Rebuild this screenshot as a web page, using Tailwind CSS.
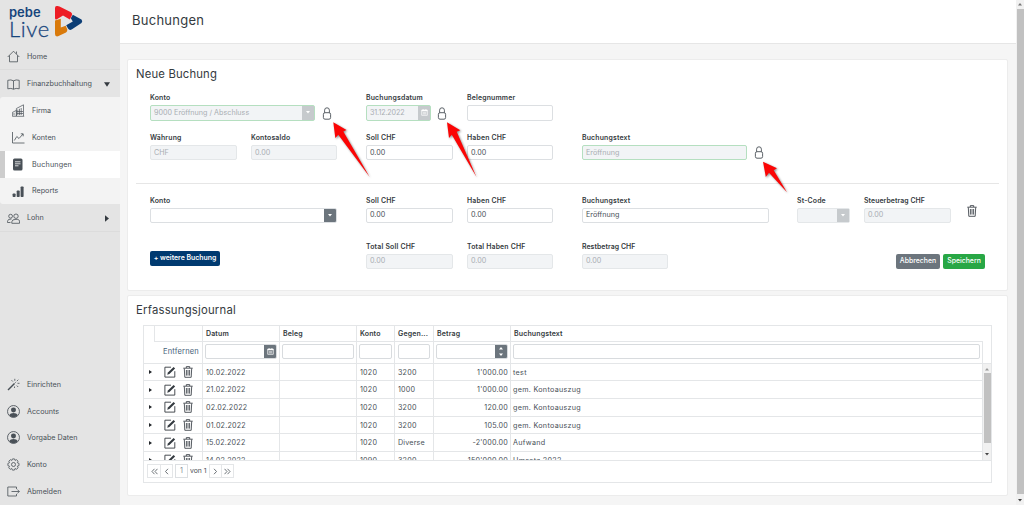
<!DOCTYPE html>
<html lang="de">
  <head>
    <meta charset="UTF-8" />
    <meta name="viewport" content="width=device-width, initial-scale=1.0" />
    <title>Buchungen</title>
    <script src="https://cdn.jsdelivr.net/npm/@tailwindcss/browser@4"></script>
  </head>
  <body
    class="relative flex h-[505px] w-[1024px] overflow-hidden bg-[#f5f5f5] font-['Inter','Liberation_Sans',sans-serif] text-[7.2px] leading-none text-[#495057]"
  >
    <!-- Icons -->
    <svg class="hidden">
      <symbol id="lock" viewBox="0 0 10 13">
        <path d="M2.6 5.7V3.2a2.4 2.4 0 0 1 4.8 0v2.5M1.4 7.3q0-1.6 1.6-1.6h4q1.6 0 1.6 1.6v3.3q0 1.6-1.6 1.6H3q-1.6 0-1.6-1.6z" fill="none" stroke="#495057" stroke-width=".9" />
      </symbol>
      <symbol id="trash" viewBox="0 0 10 12">
        <path d="M.3 2.2h9.4M3.3 2V.6h3.4V2M1.3 2.4l.5 8.9h6.4l.5-8.9M3.4 4v5.6M5 4v5.6M6.6 4v5.6" fill="none" stroke="#444a50" stroke-width=".9" />
      </symbol>
      <symbol id="edit" viewBox="0 0 12 12">
        <path d="M7 1.2H.9v9.9h9.9V5.2" fill="none" stroke="#343a40" stroke-width=".9" />
        <path d="M3.2 8.8l.7-2.2L9.6 1l1.5 1.4-5.7 5.7z" fill="#343a40" />
      </symbol>
      <symbol id="calendar" viewBox="0 0 8 8">
        <path d="M.8 1.2h6.4v6H.8z" fill="none" stroke="#fff" stroke-width=".8" />
        <path d="M.8 1h6.4v1.6H.8zM2 3.6h4v.8H2zM2 5.2h4V6H2zM2 0h.8v1H2zM5.2 0H6v1h-.8z" fill="#fff" />
      </symbol>
      <symbol id="user" viewBox="0 0 12 12">
        <circle cx="6" cy="6" r="5.5" fill="none" stroke="#495057" stroke-width=".8" />
        <circle cx="6" cy="4.6" r="2.3" fill="#495057" />
        <path d="M2 9.2q1.2-1.9 4-1.9t4 1.9Q8.600 11.200 6 11.200T2 9.200z" fill="#495057" />
      </symbol>
    </svg>

    <!-- Sidebar -->
    <aside class="flex w-[120px] shrink-0 flex-col bg-[#e4e4e4]">
      <div class="flex h-[43px] shrink-0 pl-[9px] text-[#17457c]">
        <div class="w-[46px] pt-[5px]">
          <p class="h-[14px] text-[13px] leading-[14px] font-semibold">pebe</p>
          <p class="h-[20px] font-['Lato'] text-[22px] leading-[20px] font-light tracking-[0.03em] [-webkit-text-stroke:0.3px_#17457c]">Live</p>
        </div>
        <svg class="mt-[5px] h-[33px] w-[28px]" viewBox="0 0 28 33">
          <path d="M0 3Q0 .5 2.500 1L4.500 1.400 16 7.200Q17.700 8.500 16.800 10.500L14.800 14.500 8 10.600 1.500 14.500Q0 15 0 13z" fill="#ed1c24" />
          <path d="M17.800 9.800L26.500 14.500Q28 16.300 26.500 18L17 24.300Q14.500 25.800 13 23.500L11.200 20.300 17.800 16.600 15.800 13.200z" fill="#0b3d75" />
          <path d="M0 15.500L5.800 13.800V22.500L10.700 20.800 12.300 24.500Q12.600 26.500 11 27.600L3 31.300Q0 32 0 29z" fill="#d97a0b" />
        </svg>
      </div>

      <a class="flex h-[27px] shrink-0 items-center border-b border-[#dcdcdc] pl-[7px] pt-px">
        <svg class="mr-[7px] size-[13px]" viewBox="0 0 13 13" fill="none" stroke="#495057" stroke-width=".8"><path d="M.7 7L6.500 1.200 12.300 7M2.500 5.500v6.300h8V5.500M9.500 3.800V1.500" /></svg>
        Home
      </a>
      <a class="flex h-[27px] shrink-0 items-center pl-[7px] pt-px">
        <svg class="mr-[7px] size-[13px]" viewBox="0 0 13 13" fill="none" stroke="#495057" stroke-width=".8"><path d="M6.500 2.800Q4 1.300.8 2.300v8.500Q4 9.800 6.500 11.200 9 9.800 12.200 10.800V2.300Q9 1.300 6.500 2.800zM6.500 2.800v8.400" /></svg>
        <span class="w-[77px]">Finanzbuchhaltung</span>
        <svg class="h-[5px] w-[6px]" viewBox="0 0 6 5"><path d="M0 .3h6L3 4.800z" fill="#343a40" /></svg>
      </a>

      <div class="shrink-0 rounded-l-[3px] bg-[#f3f3f3]">
        <a class="flex h-[27px] items-center pl-[12px]">
          <svg class="mr-[7px] size-[13px]" viewBox="0 0 13 13" fill="none" stroke="#495057" stroke-width=".7"><path d="M.4 12V8.400l4-2V12M4.400 12V4.500L11.500.8V12M.2 12.300h12M2 8.800v2.500M5.800 5.500v5.500M7.500 4.800v6.200M9.200 4v7M5 7.500h6M5 9.500h6" /></svg>
          Firma
        </a>
        <a class="flex h-[27px] items-center pl-[12px]">
          <svg class="mr-[7px] size-[13px]" viewBox="0 0 13 13" fill="none" stroke="#495057" stroke-width=".8"><path d="M.5 1v11h12M2.300 9.500L4.800 5.500 7 7.500 11 3M8.800 2.800H11.200v2.500" /></svg>
          Konten
        </a>
        <a class="flex h-[27px] items-center border-l-[5px] border-[#cdcdcd] bg-white pl-[7px] tracking-[0.02em]">
          <svg class="mr-[7px] size-[13px]" viewBox="0 0 13 13"><rect x="1" y=".5" width="9.500" height="12" rx="1.500" fill="#495057" /><path d="M3 3.800h5.500M3 5.800h5.500M3 7.800h3.500" stroke="#fff" stroke-width=".8" /></svg>
          Buchungen
        </a>
        <a class="flex h-[26px] items-center pl-[12px]">
          <svg class="mr-[7px] size-[13px]" viewBox="0 0 13 13" fill="#495057"><rect x=".6" y="8.500" width="3" height="3.500" rx=".8" /><rect x="4.700" y="5.500" width="3" height="6.500" rx=".8" /><rect x="8.600" y="1.500" width="3" height="10.500" rx=".8" /></svg>
          Reports
        </a>
      </div>

      <a class="flex h-[28px] shrink-0 items-center border-b border-[#dcdcdc] pl-[7px] pt-px">
        <svg class="mr-[7px] size-[13px]" viewBox="0 0 13 13" fill="none" stroke="#495057" stroke-width=".8"><circle cx="3.600" cy="4.200" r="1.900" /><circle cx="9" cy="4.200" r="2.200" /><path d="M4.800 11.300V9.800Q5 7.300 9 7.300t3.500 2.500v1.500zM4.500 7Q.7 6.800.5 9.200V10.500h3" /></svg>
        <span class="w-[78px]">Lohn</span>
        <svg class="h-[7px] w-[4px]" viewBox="0 0 4 7"><path d="M0 .3v6.400L4 3.500z" fill="#343a40" /></svg>
      </a>

      <div class="mt-auto grid h-[134px] shrink-0 grid-rows-5">
        <a class="flex items-center pl-[7px]">
          <svg class="mr-[7px] size-[13px]" viewBox="0 0 13 13" fill="none" stroke="#495057" stroke-width=".8"><path d="M1 12L7.500 5.500" stroke-width="1.500" /><path d="M4.500 2.200L5.800 3.500M7.800.8v2M11.300 1.700L9.800 3.200M10.500 5.300h2M9.800 7.600l1.400 1.400M7.500 8.500v1.500M7.700 5.300l1-1" /></svg>
          Einrichten
        </a>
        <a class="flex items-center pl-[7px]"><svg class="mr-[7px] size-[13px]"><use href="#user" /></svg>Accounts</a>
        <a class="flex items-center pl-[7px]"><svg class="mr-[7px] size-[13px]"><use href="#user" /></svg>Vorgabe Daten</a>
        <a class="flex items-center pl-[7px]">
          <svg class="mr-[7px] size-[13px]" viewBox="0 0 13 13" fill="none" stroke="#495057" stroke-width=".8" stroke-linejoin="round"><circle cx="6.500" cy="6.500" r="2" /><path d="M5.500.9h2l.5 1.500 1.500-.7 1.600 1.500-.8 1.500 1.700.7v2.200l-1.700.6.8 1.600-1.500 1.500-1.600-.8-.6 1.600H5.400l-.6-1.600-1.600.8-1.500-1.500.8-1.600L.9 7.600V5.400l1.600-.7-.7-1.500 1.500-1.500 1.600.7z" /></svg>
          Konto
        </a>
        <a class="flex items-center pl-[7px]">
          <svg class="mr-[7px] size-[13px]" viewBox="0 0 13 13" fill="none" stroke="#495057" stroke-width=".8"><path d="M9.500 4V2H.8v9h8.700V9M4.500 6.500h7.800M10.300 4.500l2 2-2 2" /></svg>
          Abmelden
        </a>
      </div>
    </aside>

    <!-- Content -->
    <main class="flex w-[896px] shrink-0 flex-col">
      <header class="h-[43.500px] shrink-0 border-b border-[#e6e6e6] bg-white pt-[14px] pl-[12px]">
        <h1 class="text-[13px] tracking-[0.02em] text-[#343a40]">Buchungen</h1>
      </header>

      <section class="mt-[15px] ml-[7px] h-[232px] w-[881px] shrink-0 rounded-[2px] border border-[#ececec] bg-white px-[8px]">
        <h2 class="h-[34px] pt-[9px] text-[11.300px] tracking-[0.015em] text-[#343a40]">Neue Buchung</h2>

        <div class="h-[90px] border-b border-[#e6e6e6] pl-[14px]">
          <div class="grid h-[39.500px] grid-cols-[216px_101px_115px_1fr]">
            <div>
              <label class="block h-[11px] pt-[1.5px] text-[6.900px] font-semibold tracking-[0.025em] text-[#343a40]">Konto</label>
              <div class="flex">
                <div class="flex h-[16px] w-[165px] items-center justify-between rounded-[2px] border border-[#b5dfc0] bg-[#f2f4f6] pl-[3px] text-[#a9aeb3]">
                  9000 Eröffnung / Abschluss
                  <span class="grid h-full w-[12px] place-items-center bg-[#c6cacd]"><svg class="h-[3px] w-[4px]" viewBox="0 0 4 3"><path d="M0 0h4L2 2.500z" fill="#fff" /></svg></span>
                </div>
                <svg class="mt-[2px] ml-[7px] h-[13px] w-[10px]"><use href="#lock" /></svg>
              </div>
            </div>
            <div>
              <label class="block h-[11px] pt-[1.5px] text-[6.900px] font-semibold tracking-[0.025em] text-[#343a40]">Buchungsdatum</label>
              <div class="flex">
                <div class="flex h-[16px] w-[65px] items-center justify-between rounded-[2px] border border-[#b5dfc0] bg-[#f2f4f6] pl-[3px] tracking-[-0.02em] text-[#a9aeb3]">
                  31.12.2022
                  <span class="grid h-full w-[12px] place-items-center bg-[#c6cacd]"><svg class="size-[7px]"><use href="#calendar" /></svg></span>
                </div>
                <svg class="mt-[2px] ml-[6px] h-[13px] w-[10px] shrink-0"><use href="#lock" /></svg>
              </div>
            </div>
            <div>
              <label class="block h-[11px] pt-[1.5px] text-[6.900px] font-semibold tracking-[0.025em] text-[#343a40]">Belegnummer</label>
              <div class="h-[16px] w-[86px] rounded-[2px] border border-[#dcdfe2]"></div>
            </div>
          </div>
          <div class="grid grid-cols-[101px_115px_101px_115px_1fr]">
            <div>
              <label class="block h-[12px] pt-[1.5px] text-[6.900px] font-semibold tracking-[0.025em] text-[#343a40]">Währung</label>
              <div class="flex h-[15px] w-[87px] items-center rounded-[2px] border border-[#e4e7e9] bg-[#f2f4f6] pl-[3px] text-[#a9aeb3]">CHF</div>
            </div>
            <div>
              <label class="block h-[12px] pt-[1.5px] text-[6.900px] font-semibold tracking-[0.025em] text-[#343a40]">Kontosaldo</label>
              <div class="flex h-[15px] w-[86px] items-center rounded-[2px] border border-[#e4e7e9] bg-[#f2f4f6] pl-[3px] text-[#a9aeb3]">0.00</div>
            </div>
            <div>
              <label class="block h-[12px] pt-[1.5px] text-[6.900px] font-semibold tracking-[0.025em] text-[#343a40]">Soll CHF</label>
              <div class="flex h-[15px] w-[87px] items-center rounded-[2px] border border-[#dcdfe2] pl-[3px]">0.00</div>
            </div>
            <div>
              <label class="block h-[12px] pt-[1.5px] text-[6.900px] font-semibold tracking-[0.025em] text-[#343a40]">Haben CHF</label>
              <div class="flex h-[15px] w-[86px] items-center rounded-[2px] border border-[#dcdfe2] pl-[3px]">0.00</div>
            </div>
            <div>
              <label class="block h-[12px] pt-[1.5px] text-[6.900px] font-semibold tracking-[0.025em] text-[#343a40]">Buchungstext</label>
              <div class="flex">
                <div class="flex h-[15px] w-[165px] items-center rounded-[2px] border border-[#b5dfc0] bg-[#f2f4f6] pl-[3px] text-[#a9aeb3]">Eröffnung</div>
                <svg class="mt-[1px] ml-[7px] h-[13px] w-[10px]"><use href="#lock" /></svg>
              </div>
            </div>
          </div>
        </div>

        <div class="pt-[12px] pl-[14px]">
          <div class="grid h-[46px] grid-cols-[216px_101px_115px_215px_67px_103px_1fr]">
            <div>
              <label class="block h-[12px] pt-[2px] text-[6.900px] font-semibold tracking-[0.025em] text-[#343a40]">Konto</label>
              <div class="flex h-[15px] w-[187px] justify-end overflow-hidden rounded-[2px] border border-[#dcdfe2]">
                <span class="grid h-full w-[12px] place-items-center bg-[#6c757d]"><svg class="h-[3px] w-[4px]" viewBox="0 0 4 3"><path d="M0 0h4L2 2.500z" fill="#fff" /></svg></span>
              </div>
            </div>
            <div>
              <label class="block h-[12px] pt-[2px] text-[6.900px] font-semibold tracking-[0.025em] text-[#343a40]">Soll CHF</label>
              <div class="flex h-[15px] w-[87px] items-center rounded-[2px] border border-[#dcdfe2] pl-[3px]">0.00</div>
            </div>
            <div>
              <label class="block h-[12px] pt-[2px] text-[6.900px] font-semibold tracking-[0.025em] text-[#343a40]">Haben CHF</label>
              <div class="flex h-[15px] w-[86px] items-center rounded-[2px] border border-[#dcdfe2] pl-[3px]">0.00</div>
            </div>
            <div>
              <label class="block h-[12px] pt-[2px] text-[6.900px] font-semibold tracking-[0.025em] text-[#343a40]">Buchungstext</label>
              <div class="flex h-[15px] w-[187px] items-center rounded-[2px] border border-[#dcdfe2] pl-[3px]">Eröffnung</div>
            </div>
            <div>
              <label class="block h-[12px] pt-[2px] text-[6.900px] font-semibold tracking-[0.025em] text-[#343a40]">St-Code</label>
              <div class="flex h-[15px] w-[53px] justify-end rounded-[2px] border border-[#e4e7e9] bg-[#f2f4f6]">
                <span class="grid h-full w-[12px] place-items-center bg-[#c6cacd]"><svg class="h-[3px] w-[4px]" viewBox="0 0 4 3"><path d="M0 0h4L2 2.500z" fill="#fff" /></svg></span>
              </div>
            </div>
            <div>
              <label class="block h-[12px] pt-[2px] text-[6.900px] font-semibold tracking-[0.01em] text-[#343a40]">Steuerbetrag CHF</label>
              <div class="flex h-[15px] w-[87px] items-center rounded-[2px] border border-[#e4e7e9] bg-[#f2f4f6] pl-[3px] text-[#a9aeb3]">0.00</div>
            </div>
            <svg class="mt-[9px] h-[12px] w-[10px]"><use href="#trash" /></svg>
          </div>
          <div class="flex">
            <div class="w-[216px] pt-[9px]">
              <button class="block h-[15px] w-[70px] rounded-[2px] bg-[#003a70] text-[6.900px] font-semibold whitespace-nowrap text-white">+ weitere Buchung</button>
            </div>
            <div class="w-[101px]">
              <label class="block h-[12px] pt-[2px] text-[6.900px] font-semibold tracking-[0.03em] text-[#343a40]">Total Soll CHF</label>
              <div class="flex h-[15px] w-[87px] items-center rounded-[2px] border border-[#e4e7e9] bg-[#f2f4f6] pl-[3px] text-[#a9aeb3]">0.00</div>
            </div>
            <div class="w-[115px]">
              <label class="block h-[12px] pt-[2px] text-[6.900px] font-semibold tracking-[0.025em] text-[#343a40]">Total Haben CHF</label>
              <div class="flex h-[15px] w-[86px] items-center rounded-[2px] border border-[#e4e7e9] bg-[#f2f4f6] pl-[3px] text-[#a9aeb3]">0.00</div>
            </div>
            <div class="w-[314px]">
              <label class="block h-[12px] pt-[2px] text-[6.900px] font-semibold tracking-[0.01em] text-[#343a40]">Restbetrag CHF</label>
              <div class="flex h-[15px] w-[86px] items-center rounded-[2px] border border-[#e4e7e9] bg-[#f2f4f6] pl-[3px] text-[#a9aeb3]">0.00</div>
            </div>
            <div class="flex gap-[3px] pt-[12px] text-[6.900px] text-white">
              <button class="h-[15px] w-[44px] rounded-[2px] bg-[#6c757d] font-medium">Abbrechen</button>
              <button class="h-[15px] w-[42px] rounded-[2px] bg-[#28a745] font-medium">Speichern</button>
            </div>
          </div>
        </div>
      </section>

      <section class="mt-[4px] ml-[7px] h-[201px] w-[881px] shrink-0 rounded-[2px] border border-[#ececec] bg-white pl-[8px]">
        <h2 class="h-[29px] pt-[9px] text-[11.300px] tracking-[0.02em] text-[#343a40]">Erfassungsjournal</h2>

        <div class="ml-[7px] h-[158px] w-[849px] border border-[#e4e6e8]">
          <div class="grid h-[16px] grid-cols-[10px_48px_77px_77px_38px_39px_77px_473px_8px] text-[7px] font-semibold tracking-[0.02em] text-[#343a40]">
            <div></div>
            <div class="border-b border-l border-[#e4e6e8]"></div>
            <div class="border-b border-l border-[#e4e6e8] pt-[4px] pl-[3px]">Datum</div>
            <div class="border-b border-l border-[#e4e6e8] pt-[4px] pl-[3px]">Beleg</div>
            <div class="border-b border-l border-[#e4e6e8] pt-[4px] pl-[3px]">Konto</div>
            <div class="border-b border-l border-[#e4e6e8] pt-[4px] pl-[3px]">Gegen...</div>
            <div class="border-b border-l border-[#e4e6e8] pt-[4px] pl-[3px]">Betrag</div>
            <div class="border-b border-l border-[#e4e6e8] pt-[4px] pl-[3px]">Buchungstext</div>
          </div>
          <div class="grid h-[22px] grid-cols-[10px_48px_77px_77px_38px_39px_77px_473px_8px] border-b border-[#e4e6e8]">
            <div></div>
            <div class="flex items-center justify-end pr-[3px] text-[7.500px] tracking-[0.025em] text-[#456078]">Entfernen</div>
            <div class="border-l border-[#e4e6e8] px-[2px] pt-[2px]">
              <div class="flex h-[15px] w-[72px] justify-end overflow-hidden rounded-[2px] border border-[#d8dbde]"><span class="grid h-full w-[12px] place-items-center bg-[#6c757d]"><svg class="size-[7px]"><use href="#calendar" /></svg></span></div>
            </div>
            <div class="border-l border-[#e4e6e8] px-[2px] pt-[2px]"><div class="h-[15px] rounded-[2px] border border-[#d8dbde]"></div></div>
            <div class="border-l border-[#e4e6e8] px-[2px] pt-[2px]"><div class="h-[15px] rounded-[2px] border border-[#d8dbde]"></div></div>
            <div class="border-l border-[#e4e6e8] px-[3px] pt-[2px]"><div class="h-[15px] rounded-[2px] border border-[#d8dbde]"></div></div>
            <div class="border-l border-[#e4e6e8] px-[2px] pt-[2px]">
              <div class="flex h-[15px] w-[72px] justify-end overflow-hidden rounded-[2px] border border-[#d8dbde]"><span class="grid h-full w-[12px] place-items-center bg-[#6c757d]"><svg class="h-[9px] w-[4px]" viewBox="0 0 4 9"><path d="M0 2.500h4L2 0zM0 6.500h4L2 9z" fill="#fff" /></svg></span></div>
            </div>
            <div class="border-x border-[#e4e6e8] px-[2px] pt-[2px]"><div class="h-[15px] rounded-[2px] border border-[#d8dbde]"></div></div>
          </div>

          <div class="flex h-[97px] border-b border-[#e4e6e8]">
            <div id="rows" class="w-[839px] overflow-hidden"></div>
            <div class="flex w-[8px] flex-col items-center justify-between bg-[#f1f1f1] py-[4px]">
              <svg class="h-[3px] w-[4px]" viewBox="0 0 4 3"><path d="M0 2.500h4L2 0z" fill="#999" /></svg>
              <div class="mt-[2px] mb-auto h-[70px] w-[7px] bg-[#c1c1c1]"></div>
              <svg class="h-[3px] w-[4px]" viewBox="0 0 4 3"><path d="M0 0h4L2 2.500z" fill="#444" /></svg>
            </div>
          </div>

          <div class="flex pt-[3.500px] pl-[3px]">
            <span class="grid h-[14px] w-[14px] place-items-center border border-[#e4e6e8]"><svg class="size-[7px]" viewBox="0 0 7 7" fill="none" stroke="#495057" stroke-width=".8"><path d="M3.500.8L1 3.500l2.500 2.700M6.500.8L4 3.500l2.500 2.700" /></svg></span>
            <span class="-ml-px grid h-[14px] w-[13px] place-items-center border border-[#e4e6e8]"><svg class="size-[7px]" viewBox="0 0 7 7" fill="none" stroke="#495057" stroke-width=".8"><path d="M5 .8L2.500 3.500 5 6.200" /></svg></span>
            <span class="ml-[2px] grid h-[14px] w-[13px] place-items-center border border-[#dcdfe2] text-[#868e96]">1</span>
            <span class="w-[21px] pt-[3.500px] pl-[2px] text-[6.800px] whitespace-nowrap">von 1</span>
            <span class="grid h-[14px] w-[13px] place-items-center border border-[#e4e6e8]"><svg class="size-[7px]" viewBox="0 0 7 7" fill="none" stroke="#495057" stroke-width=".8"><path d="M2 .8l2.500 2.700L2 6.200" /></svg></span>
            <span class="-ml-px grid h-[14px] w-[13px] place-items-center border border-[#e4e6e8]"><svg class="size-[7px]" viewBox="0 0 7 7" fill="none" stroke="#495057" stroke-width=".8"><path d="M.5.8L3 3.500.5 6.200M3.500.8L6 3.500 3.500 6.200" /></svg></span>
          </div>
        </div>
      </section>
    </main>

    <!-- Page scrollbar -->
    <div class="flex w-[8px] shrink-0 flex-col items-center bg-[#f1f1f1]">
      <svg class="mt-[3px] h-[3px] w-[4px]" viewBox="0 0 4 3"><path d="M0 2.500h4L2 0z" fill="#777" /></svg>
      <div class="mt-[3px] h-[485px] w-[7px] bg-[#c1c1c1]"></div>
      <svg class="mt-[5px] h-[3px] w-[4px]" viewBox="0 0 4 3"><path d="M0 0h4L2 2.500z" fill="#444" /></svg>
    </div>

    <!-- Pointers to the lock buttons -->
    <svg class="absolute inset-0 h-[505px] w-[1024px] drop-shadow-[1px_1px_1px_rgba(0,0,0,0.45)]" fill="#fb0505">
      <path d="M333.300 122.300L346.500 130 343.300 131.500 369.700 177 338.300 134.800 335.300 138z" />
      <path d="M447 122.300L460.300 130.300 456.700 131.700 476.500 177 451.800 134.800 449 138z" />
      <path d="M763 161.700L777 168.300 773.700 170.300 787 192.200 769 172.800 765.800 177z" />
    </svg>

    <script>
      const entries = [
        ['10.02.2022', '1020', '3200', "1'000.00", 'test'],
        ['21.02.2022', '1020', '1000', "1'000.00", 'gem. Kontoauszug'],
        ['02.02.2022', '1020', '3200', '120.00', 'gem. Kontoauszug'],
        ['01.02.2022', '1020', '3200', '105.00', 'gem. Kontoauszug'],
        ['15.02.2022', '1020', 'Diverse', "-2'000.00", 'Aufwand'],
        ['14.02.2022', '1090', '3200', "150'000.00", 'Umsatz 2022']
      ]

      document.querySelector('#rows').innerHTML = entries
        .map(
          ([date, account, contra, amount, text]) => `
          <div class="grid h-[17.700px] grid-cols-[10px_48px_77px_77px_38px_39px_77px_473px] border-b border-[#e4e6e8] leading-[17px] tracking-[0.025em]">
            <div class="flex items-center pl-[5px]"><svg class="h-[4px] w-[3px]" viewBox="0 0 3 4"><path d="M0 0v4l3-2z" fill="#212529" /></svg></div>
            <div class="flex items-center gap-[7px] pl-[10px]">
              <svg class="size-[12px]"><use href="#edit" /></svg>
              <svg class="h-[12px] w-[10px]"><use href="#trash" /></svg>
            </div>
            <div class="border-l border-[#e4e6e8] pl-[3px]">${date}</div>
            <div class="border-l border-[#e4e6e8]"></div>
            <div class="border-l border-[#e4e6e8] pl-[3px]">${account}</div>
            <div class="border-l border-[#e4e6e8] pl-[3px]">${contra}</div>
            <div class="border-l border-[#e4e6e8] pr-[2px] text-right">${amount}</div>
            <div class="border-x border-[#e4e6e8] pl-[2px] tracking-[0.04em]">${text}</div>
          </div>`
        )
        .join('')
    </script>
  </body>
</html>
